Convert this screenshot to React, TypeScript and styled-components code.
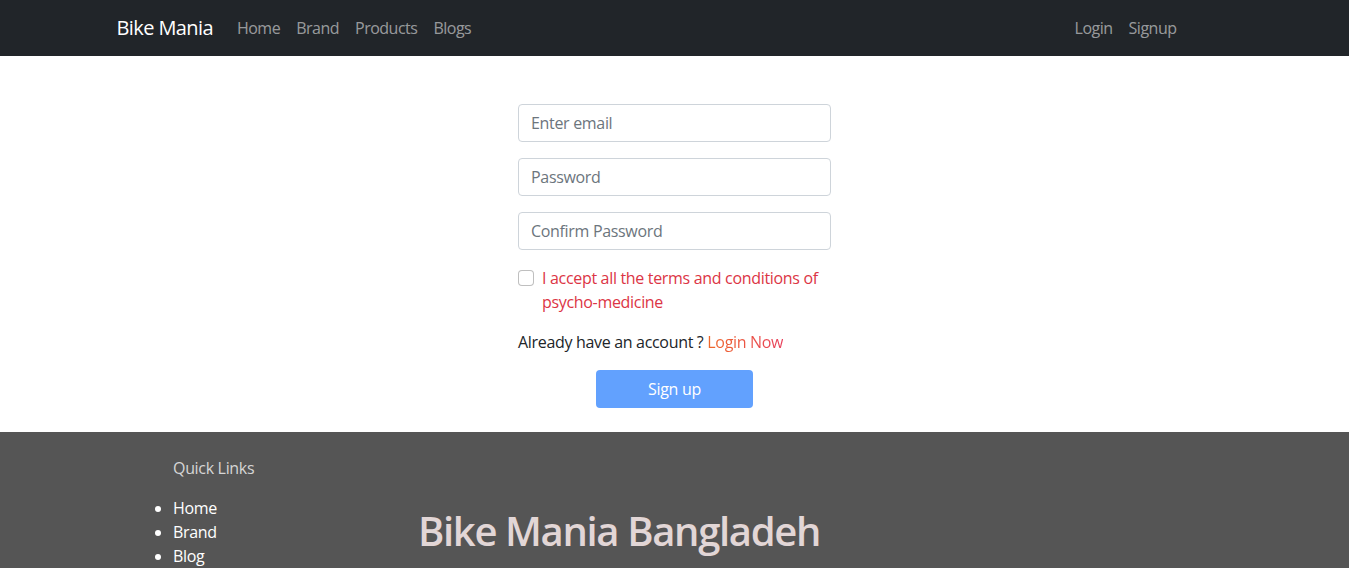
import React from "react";
import styled, { createGlobalStyle } from "styled-components";

const GlobalStyle = createGlobalStyle`
  * { box-sizing: border-box; }
  body {
    margin: 0;
    font-family: "Open Sans", "Noto Sans", sans-serif;
    font-size: 16px;
    line-height: 24px;
    letter-spacing: -0.02em;
    color: #212529;
    background: #fff;
  }
`;

const NavBar = styled.nav`
  height: 56px;
  background: #212529;
`;

const NavContainer = styled.div`
  max-width: 1140px;
  height: 100%;
  margin: 0 auto;
  padding: 0 12px;
  display: flex;
  align-items: center;
  justify-content: space-between;
`;

const NavLeft = styled.div`
  display: flex;
  align-items: center;
`;

const Brand = styled.a`
  font-size: 20px;
  line-height: 30px;
  letter-spacing: -0.6px;
  color: #fff;
  text-decoration: none;
  margin-right: 16px;
`;

const NavList = styled.div<{ $end?: boolean }>`
  display: flex;
  margin-right: ${(p) => (p.$end ? "48px" : "0")};
`;

const NavLink = styled.a`
  padding: 8px;
  letter-spacing: -0.5px;
  color: rgba(255, 255, 255, 0.55);
  text-decoration: none;
`;

const Main = styled.main`
  display: flex;
  justify-content: center;
  padding: 48px 0 24px;
`;

const Form = styled.form`
  width: 313px;
  display: flex;
  flex-direction: column;
`;

const Input = styled.input`
  height: 38px;
  width: 100%;
  padding: 6px 12px;
  margin-bottom: 16px;
  font: inherit;
  letter-spacing: inherit;
  color: #212529;
  border: 1px solid #ced4da;
  border-radius: 4px;
  outline: none;
  &::placeholder { color: #6c757d; }
`;

const CheckRow = styled.label`
  display: flex;
  align-items: flex-start;
  margin-bottom: 16px;
`;

const CheckBox = styled.span`
  flex: none;
  width: 16px;
  height: 16px;
  margin-top: 4px;
  margin-right: 8px;
  border: 1px solid rgba(0, 0, 0, 0.25);
  border-radius: 4px;
  background: #fff;
`;

const CheckText = styled.span`
  color: #dc3545;
`;

const AccountLine = styled.p`
  margin: 0 0 16px;
`;

const LoginNow = styled.a`
  background: linear-gradient(90deg, #ee6a2a 0%, #e8405c 100%);
  -webkit-background-clip: text;
  background-clip: text;
  color: transparent;
  text-decoration: none;
`;

const SubmitButton = styled.button`
  width: 50%;
  height: 38px;
  align-self: center;
  border: none;
  border-radius: 4px;
  background: #62a1fe;
  color: #fff;
  font: inherit;
  letter-spacing: inherit;
`;

const Footer = styled.footer`
  background: #555555;
  padding: 24px 0 40px 141px;
  display: flex;
`;

const LinksCol = styled.div`
  width: 277px;
`;

const LinksTitle = styled.div`
  padding-left: 32px;
  color: #d6d6d6;
  margin-bottom: 16px;
`;

const LinkList = styled.ul`
  margin: 0;
  padding-left: 32px;
  color: #fff;
  li { line-height: 24px; }
`;

const BrandCol = styled.div`
  padding-top: 51px;
`;

const FooterTitle = styled.h1`
  margin: 0 0 8px;
  font-size: 40px;
  line-height: 48px;
  font-weight: 600;
  letter-spacing: -1.35px;
  color: #e2d6d6;
`;

const FooterText = styled.p`
  margin: 0;
  color: #fff;
`;

export default function App() {
  return (
    <>
      <GlobalStyle />
      <NavBar>
        <NavContainer>
          <NavLeft>
            <Brand href="#">Bike Mania</Brand>
            <NavList>
              <NavLink href="#">Home</NavLink>
              <NavLink href="#">Brand</NavLink>
              <NavLink href="#">Products</NavLink>
              <NavLink href="#">Blogs</NavLink>
            </NavList>
          </NavLeft>
          <NavList $end>
            <NavLink href="#">Login</NavLink>
            <NavLink href="#">Signup</NavLink>
          </NavList>
        </NavContainer>
      </NavBar>
      <Main>
        <Form onSubmit={(e) => e.preventDefault()}>
          <Input type="email" placeholder="Enter email" />
          <Input type="password" placeholder="Password" />
          <Input type="password" placeholder="Confirm Password" />
          <CheckRow>
            <CheckBox />
            <CheckText>I accept all the terms and conditions of psycho-medicine</CheckText>
          </CheckRow>
          <AccountLine>
            Already have an account ? <LoginNow href="#">Login Now</LoginNow>
          </AccountLine>
          <SubmitButton type="submit" disabled>
            Sign up
          </SubmitButton>
        </Form>
      </Main>
      <Footer>
        <LinksCol>
          <LinksTitle>Quick Links</LinksTitle>
          <LinkList>
            <li>Home</li>
            <li>Brand</li>
            <li>Blog</li>
            <li>Products</li>
          </LinkList>
        </LinksCol>
        <BrandCol>
          <FooterTitle>Bike Mania Bangladeh</FooterTitle>
          <FooterText>All right reserved by Bike Mania</FooterText>
        </BrandCol>
      </Footer>
    </>
  );
}
